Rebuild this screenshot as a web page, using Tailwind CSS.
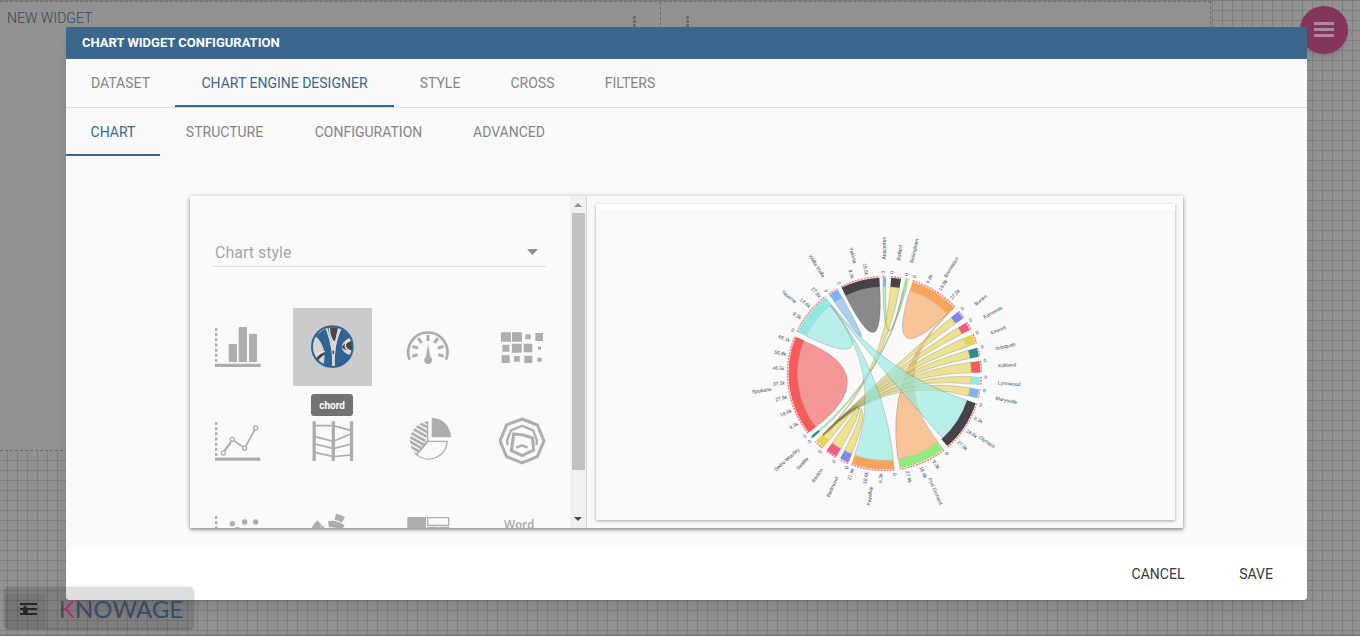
<!DOCTYPE html>
<html lang="en">
<head>
<meta charset="utf-8">
<meta name="viewport" content="width=device-width, initial-scale=1">
<title>Chart widget configuration</title>
<script src="https://cdn.jsdelivr.net/npm/@tailwindcss/browser@4"></script>
</head>
<body class="relative h-screen overflow-hidden bg-[#929292] font-['Roboto',sans-serif]">

<!-- Dashboard behind the dialog -->
<main class="flex h-full border-t border-b-2 border-t-[#7a7a7a] border-b-[#7a7a7a]">
  <div class="flex min-w-0 flex-1 flex-col bg-[linear-gradient(to_right,#7f7f7f_1px,transparent_1px),linear-gradient(to_bottom,#7f7f7f_1px,transparent_1px)] bg-[length:10px_10px] bg-[position:7px_9px]">
    <div class="flex h-[450px] border-y border-r border-dashed border-[#6c6c6c] bg-[#929292]">
      <section class="flex w-[661px] items-start justify-between border-r border-dashed border-[#6c6c6c]">
        <h2 class="pt-1.5 pl-[7px] text-sm font-light text-[#33475b]">NEW WIDGET</h2>
        <svg class="mt-3.5 mr-[22px] h-3.5 w-1.5" viewBox="0 0 6 14" fill="#6c6c6c"><path d="M1 0h3v3H1zM1 4h3v3H1zM1 8h3v3H1z"/></svg>
      </section>
      <section class="flex flex-1 items-start">
        <svg class="mt-3.5 ml-6 h-3.5 w-1.5" viewBox="0 0 6 14" fill="#6c6c6c"><path d="M1 0h3v3H1zM1 4h3v3H1zM1 8h3v3H1z"/></svg>
      </section>
    </div>
  </div>
  <div class="w-[149px] bg-[linear-gradient(to_right,#7f7f7f_1px,transparent_1px),linear-gradient(to_bottom,#7f7f7f_1px,transparent_1px)] bg-[length:10px_10px] bg-[position:1px_9px]"></div>
</main>

<button aria-label="Menu" class="absolute top-1.5 right-3 flex size-12 items-center justify-center rounded-full bg-[#85345a] shadow-md">
  <svg class="size-6" viewBox="0 0 24 24" fill="#a58d99"><path d="M2 4h20v3H2zM2 10h20v3H2zM2 16h20v3H2z"/></svg>
</button>

<!-- Dialog -->
<div class="absolute inset-0 flex pt-[27px] pr-[53px] pb-9 pl-[66px]">
  <div role="dialog" aria-labelledby="dlg" class="flex min-w-0 flex-1 flex-col overflow-hidden rounded-b bg-[#fafafa] shadow-lg">
    <header class="flex h-8 shrink-0 items-center bg-[#3b678c] px-4">
      <h1 id="dlg" class="text-[13px] font-bold text-white">CHART WIDGET CONFIGURATION</h1>
    </header>
    <nav role="tablist" class="flex h-[49px] shrink-0 border-b border-[#dcdcdc] text-sm text-[#858585]">
      <button role="tab" class="w-[109px]">DATASET</button>
      <button role="tab" aria-selected="true" class="w-[219px] border-b-2 border-[#3b678c] pt-0.5 text-[#3b678c]">CHART ENGINE DESIGNER</button>
      <button role="tab" class="w-[92px]">STYLE</button>
      <button role="tab" class="w-[93px]">CROSS</button>
      <button role="tab" class="w-[102px]">FILTERS</button>
    </nav>
    <nav role="tablist" class="flex h-12 shrink-0 text-sm text-[#858585]">
      <button role="tab" aria-selected="true" class="w-[94px] border-b-2 border-[#3b678c] pt-0.5 text-[#3b678c]">CHART</button>
      <button role="tab" class="w-[129px]">STRUCTURE</button>
      <button role="tab" class="w-[159px]">CONFIGURATION</button>
      <button role="tab" class="w-[122px]">ADVANCED</button>
    </nav>

    <div class="flex min-h-0 flex-1 px-[124px] pt-10 pb-[19px]">
      <div class="flex min-w-0 flex-1 bg-[#fafafa] shadow-[0_1px_5px_rgba(0,0,0,0.35),0_2px_2px_rgba(0,0,0,0.2)]">
        <!-- Chart type picker -->
        <div class="flex w-2/5 overflow-hidden border-r border-[#d4d4d4]">
          <div class="min-w-0 flex-1 overflow-hidden pt-10">
            <div class="relative mr-6 ml-[23px]">
              <select aria-label="Chart style" class="h-[31px] w-full appearance-none border-b border-[#dcdcdc] bg-transparent pt-1 pl-0.5 text-base text-[#a6a6a6]"><option>Chart style</option></select>
              <svg class="pointer-events-none absolute top-[13px] right-2 h-1.5 w-[11px]" viewBox="0 0 11 6" fill="#8f8f8f"><path d="M0 0h11L5.500 6z"/></svg>
            </div>
            <div class="mt-[41px] grid grid-cols-4 gap-y-4 text-[#adadad]">
              <button aria-label="bar" class="mx-2 flex h-[78px] items-center justify-center">
                <svg class="size-12" viewBox="42 69 144 144" fill="currentColor"><path d="M48.500 84v103" stroke="currentColor" stroke-width="7" stroke-dasharray="9 6.500"/><path d="M45 191h137v10H45z"/><rect x="86" y="132" width="25" height="54" rx="4"/><rect x="116" y="81" width="25" height="105" rx="4"/><rect x="147" y="101" width="24" height="85" rx="4"/></svg>
              </button>
              <button aria-label="chord" class="relative mx-2 flex h-[78px] items-center justify-center bg-[#cbcbcb]">
                <svg class="size-12" viewBox="327 69 144 144" fill="#2f6391">
                  <circle cx="397" cy="140" r="61" fill="#d6d6d6"/>
                  <path d="M382 82h32q-4 20-9 40h-10q-8-20-13-40zM425 142q8-17 29-20 6 12 3 30-20 2-32-10zM346 178q12-16 28-24l4 9q-14 4-26 22zM393 152h9v10h-8z" fill="#464646"/>
                  <path d="M346 108l32-24c10 30 20 62 20 118l-28-7c10-34-1-68-24-87z"/>
                  <path d="M403 202c-1-40 3-80 22-116l28 26c-36 14-38 46 2 54-10 22-28 34-52 36z"/>
                  <path d="M388 84c0 18 4 30 14 44M456 120c-26 6-28 26 0 34M340 174c12-10 22-18 35-20" fill="none" stroke="#e8e8e8" stroke-width="4"/>
                  <path d="M377 84c14 34 22 68 21 118M424 84c-17 34-22 72-21 118" fill="none" stroke="#dedede" stroke-width="3"/>
                  <circle cx="397" cy="140" r="61" fill="none" stroke="#2f6391" stroke-width="6"/>
                </svg>
                <span role="tooltip" class="absolute top-[86px] left-[18px] z-10 flex h-[22px] w-[42px] items-center justify-center rounded-[3px] bg-[#727272] text-[10px] font-bold text-white">chord</span>
              </button>
              <button aria-label="gauge" class="mx-2 flex h-[78px] items-center justify-center">
                <svg class="size-12" viewBox="42 69 144 144" fill="none" stroke="currentColor" stroke-width="8"><path d="M59 179A59 59 0 1 1 168 179"/><path d="M114 105v18M84 115l11 13M144 115l-11 13M67 139l17 5M161 139l-17 5M67 169l16-5M161 169l-16-5" stroke-width="9"/><path d="M114 132l7 38a12 12 0 1 1-13 0z" fill="currentColor" stroke="none"/></svg>
              </button>
              <button aria-label="heatmap" class="mx-2 flex h-[78px] items-center justify-center">
                <svg class="size-12" viewBox="327 69 144 144" fill="currentColor"><path d="M333 97h30v28h-30zM366 97h30v28h-30zM406 103h16v15h-16zM436 99h23v24h-23zM337 134h21v21h-21zM366 131h29v27h-29zM401 131h26v26h-26zM444 140h9v9h-9zM335 166h24v23h-24zM372 168h17v17h-17zM403 167h24v22h-24zM442 173h13v12h-13z"/></svg>
              </button>
              <button aria-label="line" class="mx-2 flex h-[78px] items-center justify-center">
                <svg class="size-12" viewBox="42 36 144 144" fill="none" stroke="currentColor" stroke-width="4"><path d="M48.500 51v103" stroke-width="7" stroke-dasharray="9 6.500"/><path d="M45 162.500h136" stroke-width="10"/><path d="M72 138l22-29M76 136l16-22M102 107l27 19M137 124l27-49" stroke-width="5"/><circle cx="70" cy="144" r="6"/><circle cx="97" cy="103" r="6"/><circle cx="134" cy="130" r="6"/><circle cx="167" cy="69" r="6"/></svg>
              </button>
              <button aria-label="parallel" class="mx-2 flex h-[78px] items-center justify-center">
                <svg class="size-12" viewBox="327 36 144 144" fill="none" stroke="currentColor" stroke-width="5"><path d="M342.500 49v119M400 49v119M454.500 49v119" stroke-width="10"/><path d="M345 62h55l54 15M345 95l55 14 54-23M345 117l55 14 54-14M345 142l55 13 54-5"/></svg>
              </button>
              <button aria-label="pie" class="mx-2 flex h-[78px] items-center justify-center">
                <svg class="size-12" viewBox="42 36 144 144" fill="none" stroke="currentColor" stroke-width="4"><path d="M125 97V38a59 59 0 0 1 58 59z" fill="currentColor" stroke="none"/><path d="M115 109h57a56 56 0 0 1-92 40z"/><clipPath id="hatch"><path d="M114 106V49a58 58 0 0 0-36 100z"/></clipPath><g clip-path="url(#hatch)" stroke-width="8"><path d="M78 34l60 34M68 42l60 34M58 51l60 34M50 61l60 34M46 74l60 34M46 88l60 34M46 102l60 34M46 116l60 34M46 130l60 34"/></g><path d="M113 49v57l-35 43"/></svg>
              </button>
              <button aria-label="radar" class="mx-2 flex h-[78px] items-center justify-center">
                <svg class="size-12" viewBox="327 36 144 144" fill="none" stroke="currentColor" stroke-width="9"><path d="M396 42l46 18 20 48-20 47-46 19-46-19-20-47 20-48z"/><path d="M353 120l-2-14 12-30 33-14 33 14 12 30-2 14" stroke-width="7"/><path d="M371 87l30 3 27 9 3 36-34 17-33-15z" stroke-width="9"/><path d="M379 128l17-7 17 7" stroke-width="7"/></svg>
              </button>
              <button aria-label="scatter" class="mx-2 flex h-[78px] items-center justify-center">
                <svg class="size-12" viewBox="42 318 144 144" fill="currentColor"><path d="M48.500 333v103" stroke="currentColor" stroke-width="7" stroke-dasharray="9 6.500"/><circle cx="97" cy="356" r="8"/><circle cx="134" cy="351" r="8"/><circle cx="167" cy="351" r="8"/><circle cx="112" cy="374" r="8"/></svg>
              </button>
              <button aria-label="sunburst" class="mx-2 flex h-[78px] items-center justify-center">
                <svg class="size-12" viewBox="327 318 144 144" fill="currentColor"><path d="M408 326q14 2 27 10l-9 17q-10-7-22-9zM384 349q24-6 50 12l-9 14q-18-10-38-8zM334 372q4-14 18-26l13 14-10 14zM360 368l7-7 8 9-5 7z"/></svg>
              </button>
              <button aria-label="treemap" class="mx-2 flex h-[78px] items-center justify-center">
                <svg class="size-12" viewBox="42 318 144 144" fill="none" stroke="currentColor" stroke-width="4"><path d="M52 336h56v90H52z" fill="currentColor" stroke="none"/><path d="M113 338h63v23h-63zM113 367h28v40h-28zM147 367h29v40h-29z"/></svg>
              </button>
              <button aria-label="wordcloud" class="mx-2 flex h-[78px] items-center justify-center">
                <svg class="size-12" viewBox="327 318 144 144" fill="currentColor"><text x="342" y="371" font-family="Noto Sans" font-size="35" font-weight="600">Word</text></svg>
              </button>
            </div>
          </div>
          <div class="flex w-4 flex-col items-center bg-[#f1f1f1]">
            <svg class="h-[17px] w-4 shrink-0" viewBox="0 0 16 17" fill="#8f8f8f"><path d="M4 11h8L8 7z"/></svg>
            <div class="h-[257px] w-[13px] bg-[#c1c1c1]"></div>
            <svg class="mt-auto h-[17px] w-4 shrink-0" viewBox="0 0 16 17" fill="#484848"><path d="M4 6h8l-4 4z"/></svg>
          </div>
        </div>
        <!-- Preview -->
        <div class="flex min-w-0 flex-1 p-2 pl-[9px]">
          <div class="flex min-w-0 flex-1 border-t-[6px] border-white bg-[#fafafa] shadow-[0_1px_3px_rgba(0,0,0,0.35)]">
            <svg id="chord" class="h-full w-full" viewBox="596 210 579 310" role="img" aria-label="Chord chart preview" font-family="Liberation Sans" font-size="5" fill="#2f4b66"></svg>
          </div>
        </div>
      </div>
    </div>

    <footer class="flex h-[53px] shrink-0 items-center justify-end gap-[52px] bg-white pr-[33px] text-sm text-[#3a3a3a]">
      <button class="w-14">CANCEL</button>
      <button class="w-9">SAVE</button>
    </footer>
  </div>
</div>

<!-- Brand bar -->
<div class="absolute bottom-2 left-[5px] flex h-[41px] w-[188px] items-end rounded bg-black/13 shadow-[0_1px_3px_rgba(0,0,0,0.4)]">
  <button aria-label="Toggle settings" class="flex h-[34px] w-[41px] items-center justify-center bg-black/8 pb-1 pl-1">
    <svg class="h-4 w-5 text-[#262626]" viewBox="0 0 20 16" fill="currentColor"><path d="M2 2h17v2H2zM2 7h17v2H2zM2 12h17v2H2zM7 4l2 3h1v3l-2 4H7l-2-3V7z"/></svg>
  </button>
  <a href="#" class="flex h-[39px] items-center pl-[13px] font-['Lato',sans-serif] text-2xl text-[#374a68]"><span class="bg-[linear-gradient(to_right,#374a68_5px,#b52d5f_5px)] bg-clip-text text-transparent">K</span>NOWAGE</a>
</div>

<script>
const palette = {blue:'#7cb5ec',dark:'#434348',green:'#90ed7d',orange:'#f7a35c',purple:'#8085e9',pink:'#f15c80',yellow:'#e4d354',teal:'#2b908f',red:'#f45b5b',cyan:'#91e8e1'};
// name, start angle, end angle (degrees clockwise from 12 o'clock), colour
const groups = [
  ['Anacortes',-1,1,'blue'],['Ballard',4,10,'dark'],['Bellingham',12.5,14.5,'green'],['Bremerton',17,47,'orange'],
  ['Burien',50,55,'purple'],['Edmonds',58,63,'pink'],['Everett',66,72,'yellow'],['Issaquah',74.5,80,'teal'],
  ['Kirkland',82.5,89.5,'red'],['Lynnwood',92,97,'cyan'],['Marysville',99.5,105,'blue'],['Olympia',108,139,'dark'],
  ['Port Orchard',142,171,'green'],['Puyallup',174,200,'orange'],['Redmond',202,207.5,'purple'],['Renton',210,217,'pink'],
  ['Seattle',219.5,225.5,'yellow'],['Sedro Woolley',228,229.5,'teal'],['Spokane',232,292.5,'red'],['Tacoma',295.5,322.5,'cyan'],
  ['Walla Walla',325,331,'blue'],['Yakima',333.5,357,'dark']
];
// source start/end, target start/end, colour
const ribbons = [
  [333.5,357,333.5,357,'dark'],[325,331,325,331,'blue'],[17,46.5,17,46.5,'orange'],
  [295.5,321.5,295.5,321.5,'cyan'],[232,292,232,292,'red'],
  [142,171,46.5,47,'orange'],[-1,1,12.5,13,'green'],[13.5,14.5,228,229,'green'],
  [219.5,224.5,219.5,224.5,'yellow'],[4,10,224.5,225,'yellow'],[50,55,224.5,225,'yellow'],[58,63,224.5,225,'yellow'],
  [66,72,224.5,225,'yellow'],[74.5,80,224.5,225,'yellow'],[82.5,89.5,224.5,225,'yellow'],[92,97,224.5,225,'yellow'],
  [99.5,105,224.5,225,'yellow'],[202,207.5,225,225.5,'yellow'],[210,217,225,225.5,'yellow'],
  [174,200,321.5,322,'cyan'],[108,138,322,322.5,'cyan']
];
const CX = 884.5, CY = 373.5, R0 = 87, R1 = 96;
const at = (a, r) => {
  const t = a * Math.PI / 180;
  return (CX + r * Math.sin(t)).toFixed(2) + ' ' + (CY - r * Math.cos(t)).toFixed(2);
};
const arc = (a, b, r, cw) => `A${r} ${r} 0 0 ${cw} ${at(b, r)}`;
let out = '';
for (const [a, b, c, d, col] of ribbons) {
  const self = a === c;
  const p = self ? `M${at(a,R0)}${arc(a,b,R0,1)}Q${CX} ${CY} ${at(a,R0)}Z`
    : `M${at(a,R0)}${arc(a,b,R0,1)}Q${CX} ${CY} ${at(c,R0)}${arc(c,d,R0,1)}Q${CX} ${CY} ${at(a,R0)}Z`;
  out += `<path d="${p}" fill="${palette[col]}" fill-opacity=".62" stroke="#333" stroke-opacity=".5" stroke-width=".4"/>`;
}
const label = (a, r, text) => {
  const flip = a > 180;
  return `<text transform="translate(${at(a,r)}) rotate(${flip ? a + 90 : a - 90})" text-anchor="${flip ? 'end' : 'start'}" dy="2">${text}</text>`;
};
for (const [name, a, b, col] of groups) {
  out += `<path d="M${at(a,R1)}${arc(a,b,R1,1)}L${at(b,R0)}${arc(b,a,R0,0)}Z" fill="${palette[col]}"/>`;
  out += `<path d="M${at(a,97)}${arc(a,b,97,1)}" fill="none" stroke="#f45b5b" stroke-opacity=".8" stroke-width="1.4" stroke-dasharray="2 1"/>`;
  for (let i = 0; a + i * 8.2 <= b; i++) out += label(a + i * 8.2, 100, i ? (i * 9.3).toFixed(1) + 'k' : '0');
  out += label((a + b) / 2, 114, name);
}
document.getElementById('chord').innerHTML = out;
</script>
</body>
</html>
